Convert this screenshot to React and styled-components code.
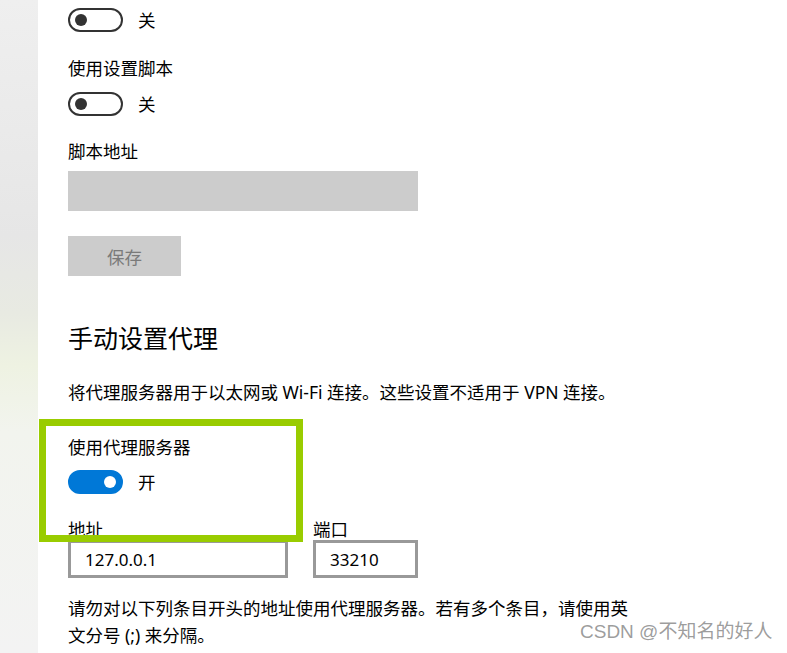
import React from "react";
import styled, { createGlobalStyle } from "styled-components";

const GlobalStyle = createGlobalStyle`
  html, body {
    margin: 0;
    padding: 0;
    background: #ffffff;
  }
  body {
    font-family: "Noto Sans", "Noto Sans CJK SC", sans-serif;
    color: #000000;
  }
`;

export default function App() {
  return (
    <Page>
      <GlobalStyle />
      <Sidebar />
      <Main>
        <ToggleRow on={false} state="关" />
        <Label style={{ marginTop: 24 }}>使用设置脚本</Label>
        <ToggleRow on={false} state="关" gap={12} />
        <Label style={{ marginTop: 23 }}>脚本地址</Label>
        <DisabledInput />
        <SaveButton>保存</SaveButton>

        <Heading>手动设置代理</Heading>
        <Description>将代理服务器用于以太网或 Wi-Fi 连接。这些设置不适用于 VPN 连接。</Description>

        <ProxySection>
          <Label>使用代理服务器</Label>
          <ToggleRow on state="开" gap={11} />
          <FieldsRow>
            <Field>
              <FieldLabel>地址</FieldLabel>
              <TextBox width={220}>127.0.0.1</TextBox>
            </Field>
            <Field>
              <FieldLabel>端口</FieldLabel>
              <TextBox width={105}>33210</TextBox>
            </Field>
          </FieldsRow>
          <Highlight />
        </ProxySection>

        <Note>
          请勿对以下列条目开头的地址使用代理服务器。若有多个条目，请使用英文分号 (;) 来分隔。
        </Note>
      </Main>
      <Watermark>CSDN @不知名的好人</Watermark>
    </Page>
  );
}

function ToggleRow({ on, state, gap = 0 }) {
  return (
    <Row style={{ marginTop: gap }}>
      <Switch on={on}>
        <Knob on={on} />
      </Switch>
      <StateText>{state}</StateText>
    </Row>
  );
}

const Page = styled.div`
  position: relative;
  display: flex;
  width: 787px;
  height: 653px;
  overflow: hidden;
`;

const Sidebar = styled.div`
  flex: 0 0 38px;
  background: linear-gradient(
    180deg,
    #efefef 0%,
    #e6e6e6 36%,
    #e8eae2 48%,
    #eef2e2 56%,
    #f2f4ee 66%,
    #f3f3f3 100%
  );
`;

const Main = styled.div`
  flex: 1;
  display: flex;
  flex-direction: column;
  align-items: flex-start;
  padding: 8px 0 0 30px;
`;

const Row = styled.div`
  display: flex;
  align-items: center;
  height: 24px;
`;

const Switch = styled.div`
  box-sizing: border-box;
  width: 55px;
  height: 24px;
  border-radius: 12px;
  border: 2px solid ${(p) => (p.on ? "#0078d7" : "#333333")};
  background: ${(p) => (p.on ? "#0078d7" : "#ffffff")};
  display: flex;
  align-items: center;
  justify-content: ${(p) => (p.on ? "flex-end" : "flex-start")};
  padding: 0 5px;
`;

const Knob = styled.div`
  width: 12px;
  height: 12px;
  border-radius: 50%;
  background: ${(p) => (p.on ? "#ffffff" : "#333333")};
`;

const StateText = styled.span`
  margin-left: 15px;
  font-size: 17.5px;
  line-height: 24px;
`;

const Label = styled.div`
  font-size: 17.5px;
  line-height: 24px;
`;

const DisabledInput = styled.div`
  margin-top: 8px;
  width: 350px;
  height: 40px;
  background: #cccccc;
`;

const SaveButton = styled.button`
  margin-top: 25px;
  width: 113px;
  height: 40px;
  border: none;
  padding: 0;
  background: #cccccc;
  color: #7a7a7a;
  font-family: inherit;
  font-size: 17.5px;
`;

const Heading = styled.h2`
  margin: 45px 0 0;
  font-size: 25px;
  font-weight: 400;
  line-height: 34px;
`;

const Description = styled.p`
  margin: 25px 0 0;
  font-size: 17.5px;
  line-height: 24px;
`;

const ProxySection = styled.div`
  position: relative;
  margin-top: 31px;
  display: flex;
  flex-direction: column;
`;

const FieldsRow = styled.div`
  display: flex;
  gap: 25px;
  margin-top: 24px;
`;

const Field = styled.div`
  display: flex;
  flex-direction: column;
`;

const FieldLabel = styled.div`
  font-size: 17.5px;
  line-height: 22px;
`;

const TextBox = styled.div`
  box-sizing: border-box;
  width: ${(p) => p.width}px;
  height: 38px;
  border: 3px solid #999999;
  padding: 0 14px;
  display: flex;
  align-items: center;
  font-size: 17px;
`;

const Highlight = styled.div`
  position: absolute;
  left: -29px;
  top: -16px;
  width: 264px;
  height: 123px;
  box-sizing: border-box;
  border: 7px solid #99cc00;
  pointer-events: none;
`;

const Note = styled.p`
  margin: 17px 0 0;
  max-width: 568px;
  font-size: 17.5px;
  line-height: 27px;
`;

const Watermark = styled.div`
  position: absolute;
  left: 580px;
  top: 620px;
  font-family: "Liberation Sans", "Noto Sans CJK SC", sans-serif;
  font-size: 19px;
  line-height: 24px;
  color: rgba(140, 140, 140, 0.85);
  text-shadow: 0 0 2px #ffffff;
`;
